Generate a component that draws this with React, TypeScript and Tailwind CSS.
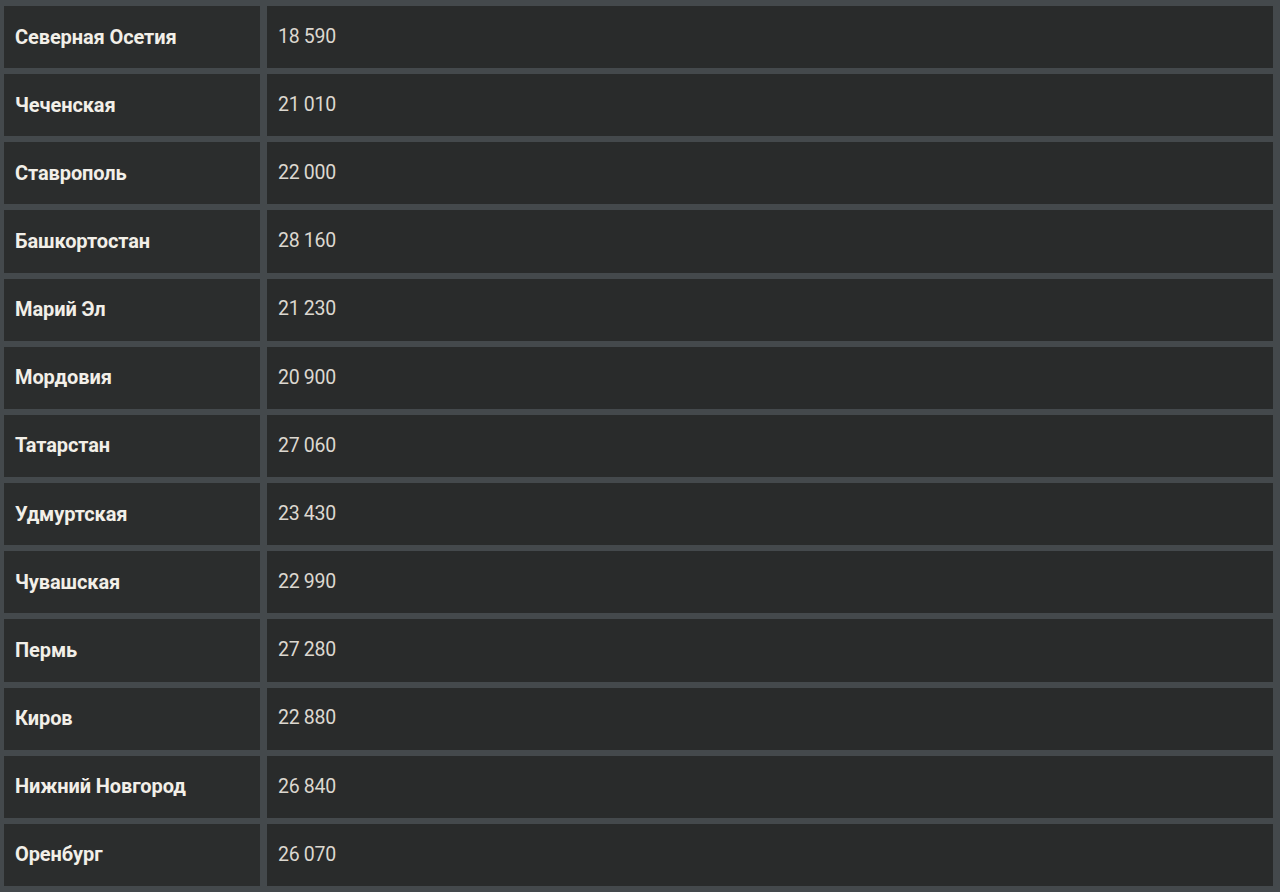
const rows: [string, string][] = [
  ['Северная Осетия', '18 590'],
  ['Чеченская', '21 010'],
  ['Ставрополь', '22 000'],
  ['Башкортостан', '28 160'],
  ['Марий Эл', '21 230'],
  ['Мордовия', '20 900'],
  ['Татарстан', '27 060'],
  ['Удмуртская', '23 430'],
  ['Чувашская', '22 990'],
  ['Пермь', '27 280'],
  ['Киров', '22 880'],
  ['Нижний Новгород', '26 840'],
  ['Оренбург', '26 070'],
];

export default function App() {
  return (
    <div
      className="h-[892px] w-[1280px] bg-[#44494c] pt-[6px] pb-[6px] pl-[4px] pr-[7px] grid grid-cols-[256px_1fr] grid-rows-[repeat(13,1fr)] gap-x-[7px] gap-y-[6px]"
      style={{ fontFamily: 'Roboto, "Liberation Sans", sans-serif' }}
    >
      {rows.map(([region, value]) => (
        <>
          <div key={region} className="bg-[#2b2d2d] flex items-center pl-[11px] pb-[1px] text-[20px] leading-none font-bold text-[#f2efe8] tracking-[-0.1px]">
            {region}
          </div>
          <div key={region + '-v'} className="bg-[#292b2b] flex items-center pl-[11px] pb-[1px] text-[19.5px] leading-none text-[#dcd8d0] tracking-[-0.3px]">
            {value}
          </div>
        </>
      ))}
    </div>
  );
}
